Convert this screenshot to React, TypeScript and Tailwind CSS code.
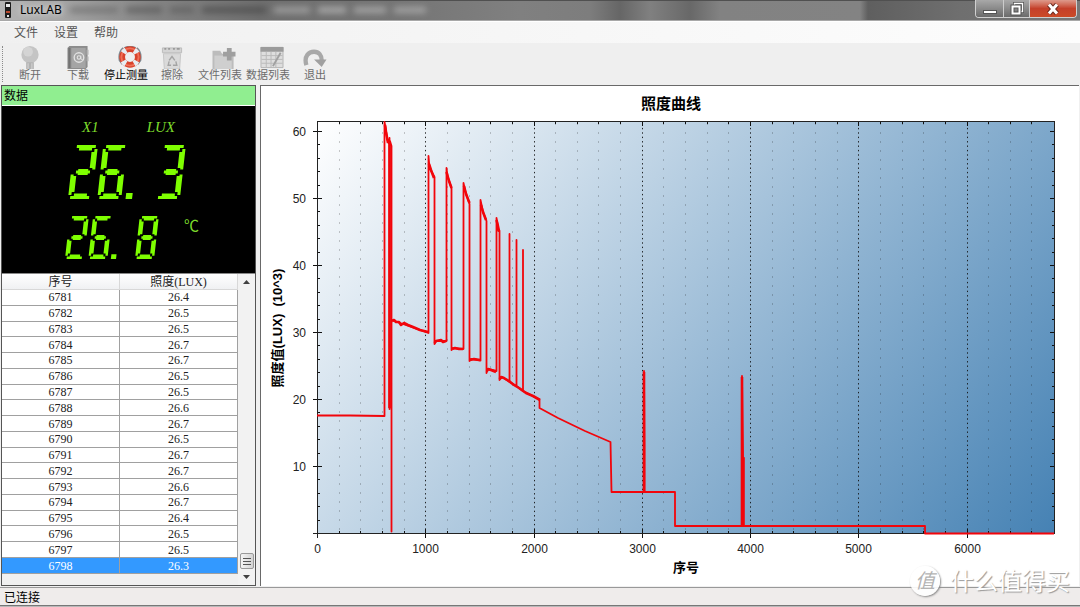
import type { ReactNode } from 'react';

type Tool = { label: string; icon: ReactNode; width: string; active?: boolean; wide?: boolean };

const MENUS = ['文件', '设置', '帮助'];

const READINGS: [number, string][] = [
  [6781, '26.4'],
  [6782, '26.5'],
  [6783, '26.5'],
  [6784, '26.7'],
  [6785, '26.7'],
  [6786, '26.5'],
  [6787, '26.5'],
  [6788, '26.6'],
  [6789, '26.7'],
  [6790, '26.5'],
  [6791, '26.7'],
  [6792, '26.7'],
  [6793, '26.6'],
  [6794, '26.7'],
  [6795, '26.4'],
  [6796, '26.5'],
  [6797, '26.5'],
  [6798, '26.3'],
];

const TOOLS: Tool[] = [
  {
    label: '断开',
    width: 'w-12',
    icon: (
      <>
        <circle cx="12" cy="9" r="9" fill="#c4c4c4" />
        <circle cx="10" cy="6" r="5" fill="#d4d4d4" />
        <path d="M8 17h8v7H8z" fill="#b2b2b2" />
        <path d="M10 18v6M14 18v6" stroke="#d8d8d8" />
      </>
    ),
  },
  {
    label: '下载',
    width: 'w-12',
    icon: (
      <>
        <path d="M1 2l2-2h19v22l-2 2H1z" fill="#8c8c8c" />
        <path d="M5 2h15v21H5z" fill="#a5a5a5" />
        <path d="M2 2h2v21H2z" fill="#737373" />
        <path d="M21 4h2v5h-2zM21 11h2v5h-2z" fill="#b5b5b5" />
        <circle cx="13" cy="12" r="5" fill="none" stroke="#e2e2e2" strokeWidth="1.4" />
        <circle cx="13" cy="12" r="1.8" fill="none" stroke="#e2e2e2" strokeWidth="1.2" />
        <path d="M15 10v3.5l2 1" fill="none" stroke="#e2e2e2" />
      </>
    ),
  },
  {
    label: '停止测量',
    width: 'w-12',
    active: true,
    wide: true,
    icon: (
      <>
        <path
          d="M5 2C1 5 0 9 1 15l3 4M19 2c4 3 5 7 4 13l-3 4M6 2q6-3 12 0"
          fill="none"
          stroke="#7d8a92"
          strokeWidth="1.6"
        />
        <circle cx="12" cy="11.5" r="8.2" fill="none" stroke="#d9432c" strokeWidth="6" />
        <circle cx="12" cy="11.5" r="9" fill="none" stroke="#ef7058" strokeWidth="2" />
        <circle
          cx="12"
          cy="11.5"
          r="8.2"
          fill="none"
          stroke="#e6edf2"
          strokeWidth="6"
          strokeDasharray="4 8.88"
          strokeDashoffset="-4.4"
        />
      </>
    ),
  },
  {
    label: '擦除',
    width: 'w-11',
    icon: (
      <>
        <path d="M2 2h20v5H2z" fill="#d4d4d4" stroke="#bcbcbc" />
        <path d="M4 3h2m2 0h2m3 0h2m2 0h3" stroke="#9a9a9a" strokeWidth="2" />
        <path d="M3 8h18l-1 16H4z" fill="#dadada" stroke="#c6c6c6" />
        <path
          d="M9 15l3-4 3 4M16 16l1 4h-4M11 20H8l1-4"
          fill="none"
          stroke="#a4a4a4"
          strokeWidth="1.5"
        />
      </>
    ),
  },
  {
    label: '文件列表',
    width: 'w-[52px]',
    wide: true,
    icon: (
      <>
        <path d="M0 5h8l2 3h12v16H0z" fill="#bcbcbc" />
        <path d="M2 10h18v14H2z" fill="#cfcfcf" />
        <path d="M15 2h5v4h4v5h-4v4h-5v-4h-4V6h4z" fill="#9f9f9f" />
      </>
    ),
  },
  {
    label: '数据列表',
    width: 'w-11',
    wide: true,
    icon: (
      <>
        <path d="M.5 1.5h23v21H.5z" fill="#dedede" stroke="#b4b4b4" />
        <path d="M0 1h24v5H0z" fill="#9b9b9b" />
        <path d="M1 10h22M1 14h22M1 18h22M6 6v16M11 6v16M16 6v16" stroke="#b9b9b9" />
        <path d="M21 7L13 21" stroke="#a0a0a0" strokeWidth="2" />
      </>
    ),
  },
  {
    label: '退出',
    width: 'w-[50px]',
    icon: (
      <>
        <path
          d="M3 20C0 10 6 6 11 6c5 0 8 4 8 9"
          fill="none"
          stroke="#a8a8a8"
          strokeWidth="4.5"
        />
        <path d="M11 14h13l-5 8z" fill="#a0a0a0" />
      </>
    ),
  },
];

function TitleBar() {
  return (
    <header className="relative flex h-[21px] items-start justify-between overflow-hidden border-b border-[#a8a8a8] bg-[linear-gradient(90deg,#b4b4b4_0,#a9a9a9_50px,#858585_150px,#6e6e6e_260px,#757575_400px,#808080_520px,#7d7d7d_590px,#666_620px,#808080_650px,#686868_690px,#828282_720px,#838383_860px,#5f5f5f_868px,#6f6f6f_960px,#777_1080px)]">
      <div className="absolute inset-x-0 top-0 h-px bg-[#505050]" />
      <div className="absolute top-[7px] left-[70px] flex gap-2 opacity-60 blur-[3px]">
        <div className="h-1.5 w-12 bg-[#646464]" />
        <div className="h-1.5 w-9 bg-[#4e4e4e]" />
        <div className="h-1.5 w-6 bg-[#565656]" />
        <div className="h-1.5 w-16 bg-[#404040]" />
        <div className="h-1.5 w-9 bg-[#bbb]" />
        <div className="h-1.5 w-7 bg-[#ccc]" />
        <div className="h-1.5 w-8 bg-[#c4c4c4]" />
        <div className="h-1.5 w-8 bg-[#c0c0c0]" />
      </div>
      <div className="relative flex h-5 items-center gap-2 pl-1">
        <svg width="8" height="16" viewBox="0 0 8 16">
          <rect x="1" width="6" height="16" rx="1" fill="#1d1d1d" />
          <rect x="2" y="2" width="4" height="3" fill="#e8e8e8" />
          <rect x="2" y="9" width="4" height="2" fill="#b8482d" />
          <rect x="3" y="13" width="2" height="2" fill="#ddd" />
        </svg>
        <h1 className="text-xs text-black [text-shadow:0_0_6px_#fff]">LuxLAB</h1>
      </div>
      <div className="relative mr-[3px] flex h-[18px] overflow-hidden rounded-b border border-t-0 border-[#d0d0d0]">
        <button
          aria-label="最小化"
          className="flex w-7 items-end justify-center border-r border-[#ccc] bg-linear-to-b from-[#a8a8a8] via-[#8d8d8d] via-45% to-[#6b6b6b] pb-[3px]"
        >
          <span className="h-[4px] w-3.5 border border-[#555] bg-white" />
        </button>
        <button
          aria-label="还原"
          className="flex w-[26px] items-center justify-center border-r border-[#ccc] bg-linear-to-b from-[#a8a8a8] via-[#8d8d8d] via-45% to-[#6b6b6b]"
        >
          <svg width="14" height="14" viewBox="0 0 14 14" fill="none">
            <path d="M4.5 3.5v-2h8v8h-2" stroke="#555" strokeWidth="3" />
            <path d="M4.5 3.5v-2h8v8h-2" stroke="#fff" strokeWidth="1.4" />
            <rect x="2.5" y="4.5" width="7" height="7" stroke="#555" strokeWidth="4" />
            <rect x="2.5" y="4.5" width="7" height="7" stroke="#fff" strokeWidth="2" />
          </svg>
        </button>
        <button
          aria-label="关闭"
          className="flex w-[46px] items-center justify-center bg-linear-to-b from-[#dd9a8c] via-[#c4402a] via-50% to-[#cc4a26]"
        >
          <svg width="14" height="12" viewBox="0 0 14 12">
            <path d="M3 1.500l8 9M11 1.500l-8 9" stroke="#6b2a20" strokeWidth="5" />
            <path d="M3 1.500l8 9M11 1.500l-8 9" stroke="#fff" strokeWidth="3" />
          </svg>
        </button>
      </div>
    </header>
  );
}

function MenuBar() {
  return (
    <nav className="flex h-[22px] items-center gap-4 border-t border-white bg-linear-to-r from-[#f0f0f0] to-[#fdfdfd] pl-3.5 text-xs text-[#555]">
      {MENUS.map((m) => (
        <button key={m}>{m}</button>
      ))}
    </nav>
  );
}

function Toolbar() {
  return (
    <div className="flex h-[42px] items-start bg-[#efefef] pt-[3px] pl-0.5">
      <div className="h-9 w-1 border-l border-dotted border-[#8a8a8a]" />
      {TOOLS.map((t) => (
        <button
          key={t.label}
          className={`flex shrink-0 flex-col items-center text-[11px] leading-3 whitespace-nowrap ${t.width} ${
            t.active ? 'text-black' : 'text-[#6c6c6c]'
          }`}
        >
          <svg width="24" height="23" viewBox="0 0 24 24" className={t.wide ? 'ml-2' : ''}>
            {t.icon}
          </svg>
          {t.label}
        </button>
      ))}
    </div>
  );
}

// which segments are lit for each digit used on the meter
const LIT: Record<string, string> = { '2': 'abged', '3': 'abgcd', '6': 'afgecd', '8': 'abcdefg' };

// each segment is a few parallel strokes so that its ends come out bevelled
const SEGMENTS: Record<string, string> = {
  a: 'M3 1.5H22M5.500 4H18.500',
  b: 'M22.500 4V24.500M19.800 7V23',
  c: 'M22.500 29.500V50M19.800 31V47',
  d: 'M2 52.500H21M5.500 50H18.500',
  e: 'M1.500 29.500V50M4.200 31V47',
  f: 'M1.500 4V24.500M4.200 7V23',
  g: 'M7 25.500H17M5 27H19M7 28.500H17',
};

function SegmentDisplay({ value, className }: { value: string; className: string }) {
  return (
    <svg
      role="img"
      aria-label={value}
      viewBox="0 0 120 54"
      className={className}
      fill="none"
      stroke="#7fff00"
      strokeWidth="3"
    >
      {[...value].map((ch, i) => (
        <g key={i} transform={`translate(${i * 29.3 + (ch === '.' ? 0 : 7)} 0) skewX(-6.4)`}>
          {ch === '.' ? (
            <rect x="6" y="48" width="6.5" height="6" fill="#7fff00" stroke="none" />
          ) : (
            [...LIT[ch]].map((s) => <path key={s} d={SEGMENTS[s]} />)
          )}
        </g>
      ))}
    </svg>
  );
}

function Meter() {
  return (
    <div className="h-[167px] bg-black pt-[11px] font-['Liberation_Serif','Noto_Sans_CJK_SC',serif] text-[15px] leading-5 text-[#7ddc2c]">
      <div className="flex gap-12 pl-20 italic">
        <span>X1</span>
        <span>LUX</span>
      </div>
      <SegmentDisplay value="26.3" className="mt-2 ml-[65px] h-[54px] w-[120px]" />
      <div className="mt-[17px] flex items-start pl-[62px]">
        <SegmentDisplay value="26.8" className="h-[43px] w-24" />
        <span className="ml-6">℃</span>
      </div>
    </div>
  );
}

function ReadingTable() {
  return (
    <div className="flex flex-1 border-t border-[#888] bg-[#f0f0f0]">
      <table className="h-[300px] flex-1 self-start border-separate border-spacing-0 text-center font-['Liberation_Serif','Noto_Sans_CJK_SC',serif] text-xs leading-3 text-[#222]">
        <thead>
          <tr className="h-4 bg-linear-to-b from-white to-[#eff0f2]">
            <th className="w-1/2 border-r border-b border-[#d8d8d8] p-0 font-normal">序号</th>
            <th className="w-1/2 border-r border-b border-[#d8d8d8] p-0 font-normal">照度(LUX)</th>
          </tr>
        </thead>
        <tbody>
          {READINGS.map(([n, lux]) => (
            <tr key={n} className={n === 6798 ? 'bg-[#3399ff] text-white' : 'bg-white'}>
              <td className="border-r border-b border-[#a0a0a0] p-0">{n}</td>
              <td className="border-r border-b border-[#a0a0a0] p-0">{lux}</td>
            </tr>
          ))}
        </tbody>
      </table>
      <div className="flex w-[17px] flex-col items-center bg-[#f2f2f2] py-1.5">
        <svg width="7" height="4" viewBox="0 0 7 4">
          <path d="M0 4l3.500-4L7 4z" fill="#404040" />
        </svg>
        <div className="mt-auto flex h-4 w-3.5 flex-col items-center justify-center gap-0.5 rounded-xs border border-[#999] bg-linear-to-r from-[#f4f4f4] to-[#d4d4d4]">
          <span className="h-px w-2 bg-[#555]" />
          <span className="h-px w-2 bg-[#555]" />
          <span className="h-px w-2 bg-[#555]" />
        </div>
        <svg width="7" height="4" viewBox="0 0 7 4" className="mt-1.5">
          <path d="M0 0h7L3.500 4z" fill="#404040" />
        </svg>
      </div>
    </div>
  );
}

const LEFT = 317.5;
const RIGHT = 1054.5;
const TOP = 121.5;
const BOTTOM = 533.5;
const px = (n: number) => Math.round(LEFT + n * 0.10825 - 0.5) + 0.5;
const py = (v: number) => Math.round(BOTTOM - v * 6.7 - 0.5) + 0.5;

const X_TICKS = Array.from({ length: 33 }, (_, i) => (i + 1) * 200);
const Y_TICKS = Array.from({ length: 30 }, (_, i) => (i + 1) * 2);

const CURVE = `M317 415.500L350 415.500L384.500 416V122L386 130L387 138L388.500 143L389.500 138V409V146L390 141L391.500 146V531.500V320
  L428.500 333V156L429.500 168L434.500 177V344L436 341L446.500 341V168L447.500 176L451.500 188V350V348L463.500 349V183L465 190L469.500 204
  V361L471 359L480.500 360.500V200L483 212L486.500 221V373L488 369L496.500 371V218L498.500 231H499.500V380L502 377L509.500 382V234V382
  L516.500 386V240V386L523 391V250V391L539.500 399.500V408L558 418L585 431L610.500 442L611.500 492H644V371L644.500 448V492H675V526H742
  V376L743 453V526H925V533.500H1054`;

// measurement noise, drawn heavier over the flat stretches
const NOISE = `M392 321L394 320L396 322L399 322L401 325L404 323L408 325L413 327L420 330L428 332M434.500 343L436 341L441 340L443 342L446 341
  M452 349L455 348L459 349L463 349M470 360L474 359L480 360M487 371L488 369L491 370L496 372M499.500 379L501 377L504 378L509 381L514 385
  L519 388L526 393L533 396L540 400M385 125L386 132L388 143M429 164L431 170L434 178M446.500 172L449 181L451.500 188M464 186L466 194L469.500 203
  M481 205L483 212L486 220M496.500 220L497.500 224L499 231M389.500 142V408M644 372V491M742 377V525L743.500 458V525`;

function LuxChart() {
  return (
    <svg
      viewBox="261 86 818 500"
      role="img"
      aria-label="照度曲线"
      className="block w-full font-['Liberation_Sans','Noto_Sans_CJK_SC',sans-serif]"
    >
      <defs>
        <linearGradient id="plot" gradientUnits="userSpaceOnUse" x1="317" y1="121" x2="979" y2="629">
          <stop offset="0" stopColor="#fff" />
          <stop offset="1" stopColor="#4682b4" />
        </linearGradient>
      </defs>
      <rect x={LEFT} y={TOP} width={RIGHT - LEFT} height={BOTTOM - TOP} fill="url(#plot)" />

      {X_TICKS.map((n) => {
        const major = n % 1000 === 0;
        return (
          <g key={n} stroke="#111">
            <line
              x1={px(n)}
              x2={px(n)}
              y1={TOP + 2}
              y2={BOTTOM}
              strokeDasharray={major ? '1.4 3' : '1 8'}
              strokeOpacity={major ? 0.9 : 0.45}
            />
            <path d={major ? `M${px(n)} 121v5M${px(n)} 529v9` : `M${px(n)} 121v3M${px(n)} 531v3`} />
          </g>
        );
      })}
      {Y_TICKS.map((v) => (
        <path
          key={v}
          stroke="#111"
          d={v % 10 === 0 ? `M313 ${py(v)}h9M1050 ${py(v)}h4` : `M317 ${py(v)}h3M1052 ${py(v)}h2`}
        />
      ))}
      <rect
        x={LEFT}
        y={TOP}
        width={RIGHT - LEFT}
        height={BOTTOM - TOP}
        fill="none"
        stroke="#222"
      />
      <path d="M317.500 533v5M313 533.500h4" stroke="#222" />

      <g fill="none" stroke="#f2050b" strokeLinejoin="round">
        <path d={CURVE} strokeWidth="1.8" />
        <path d={NOISE} strokeWidth="2.6" />
      </g>

      <g fontSize="12" fill="#222">
        {[10, 20, 30, 40, 50, 60].map((v) => (
          <text key={v} x="306" y={py(v) + 4} textAnchor="end">
            {v}
          </text>
        ))}
        {[0, 1000, 2000, 3000, 4000, 5000, 6000].map((n) => (
          <text key={n} x={px(n)} y="553" textAnchor="middle">
            {n}
          </text>
        ))}
      </g>
      <g fontWeight="700" textAnchor="middle" fill="#000">
        <text x="671" y="109" fontSize="15">
          照度曲线
        </text>
        <text x="686" y="572" fontSize="13">
          序号
        </text>
        <text transform="translate(282 328) rotate(-90)" fontSize="13" xmlSpace="preserve">
          照度值(LUX)  (10^3)
        </text>
      </g>
    </svg>
  );
}

export default function App() {
  return (
    <div className="relative flex min-h-screen flex-col bg-[#f0f0f0] font-['Noto_Sans','Noto_Sans_CJK_SC',sans-serif]">
      <TitleBar />
      <MenuBar />
      <Toolbar />
      <main className="flex flex-1 gap-1 pr-px pl-px">
        <aside className="flex w-[255px] shrink-0 flex-col border border-[#555]">
          <h2 className="h-5 border-b border-white bg-[#90ee90] pl-0.5 text-xs leading-5 text-black">
            数据
          </h2>
          <Meter />
          <ReadingTable />
        </aside>
        <section className="min-w-0 flex-1 border-t border-l border-[#696969] bg-white">
          <LuxChart />
        </section>
      </main>
      <footer className="mt-px h-[18px] border-t border-[#999] bg-[#efeceb] pl-1 text-xs leading-5 text-black">
        已连接
      </footer>
      <div className="h-0.5 border-t border-[#777] bg-[#b8b8b8]" />
      <div className="absolute right-2.5 bottom-2.5 flex items-center gap-2.5 text-white [text-shadow:1px_1px_1px_#999]">
        <span className="flex size-[30px] items-center justify-center rounded-full bg-white/90 text-xl leading-none text-[#b4b4b4] italic shadow-[1px_1px_2px_#888] [text-shadow:none]">
          值
        </span>
        <span className="text-2xl leading-8">什么值得买</span>
      </div>
    </div>
  );
}
